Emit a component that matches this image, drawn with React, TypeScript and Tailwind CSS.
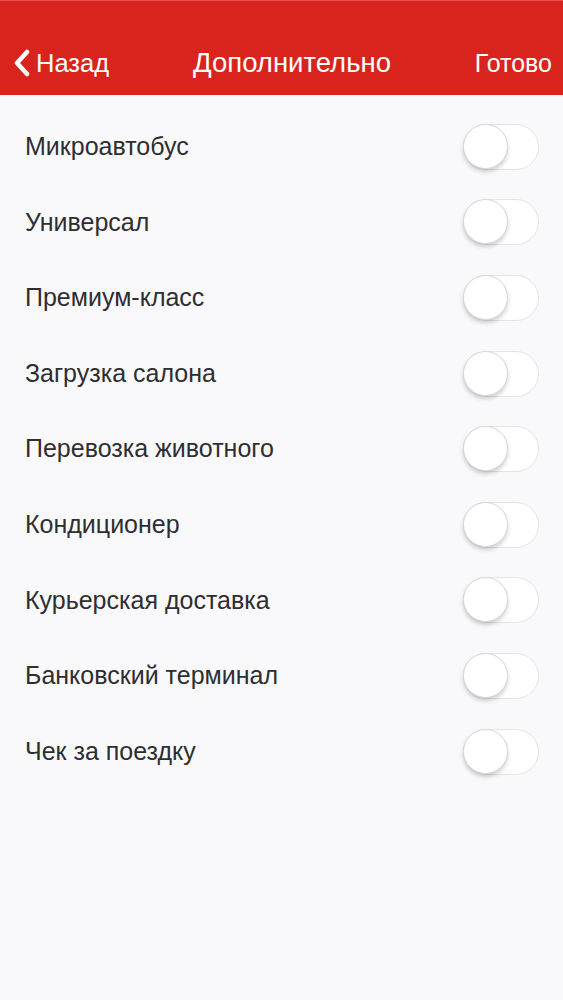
import React from "react";

const items = [
  "Микроавтобус",
  "Универсал",
  "Премиум-класс",
  "Загрузка салона",
  "Перевозка животного",
  "Кондиционер",
  "Курьерская доставка",
  "Банковский терминал",
  "Чек за поездку",
];

function Toggle() {
  return (
    <div className="relative w-[76px] h-[46px] rounded-full border-[1.5px] border-[#e4e4e6] bg-white">
      <div className="absolute left-[-1px] top-[-1px] w-[45px] h-[45px] rounded-full bg-white border border-[#d8d8da] shadow-[0_3px_4px_rgba(0,0,0,0.18)]" />
    </div>
  );
}

export default function App() {
  return (
    <div className="w-[563px] h-[1000px] bg-[#f9f9fb] flex flex-col font-['Liberation_Sans',Arial,sans-serif]">
      <div className="h-[95px] bg-[#d9241d] border-t border-[#e5524c] flex items-end pb-[18px] px-[12px] text-white">
        <div className="flex-1 flex items-center gap-[4px]">
          <svg width="20" height="28" viewBox="0 0 20 28" className="mt-[1px]">
            <path d="M15 3 L5 14 L15 25" fill="none" stroke="white" strokeWidth="4.5" strokeLinecap="round" strokeLinejoin="round" />
          </svg>
          <span className="text-[25.5px] leading-[28px]">Назад</span>
        </div>
        <div className="text-[27.5px] leading-[28px] ml-[20px]">Дополнительно</div>
        <div className="flex-1 flex justify-end text-[25px] leading-[28px] mr-[-1px]">Готово</div>
      </div>
      <div className="pt-[14px]">
        {items.map((t) => (
          <div key={t} className="h-[75.6px] flex items-center justify-between pl-[25px] pr-[24px]">
            <span className="text-[25px] text-[#2e2e30]">{t}</span>
            <Toggle />
          </div>
        ))}
      </div>
    </div>
  );
}
